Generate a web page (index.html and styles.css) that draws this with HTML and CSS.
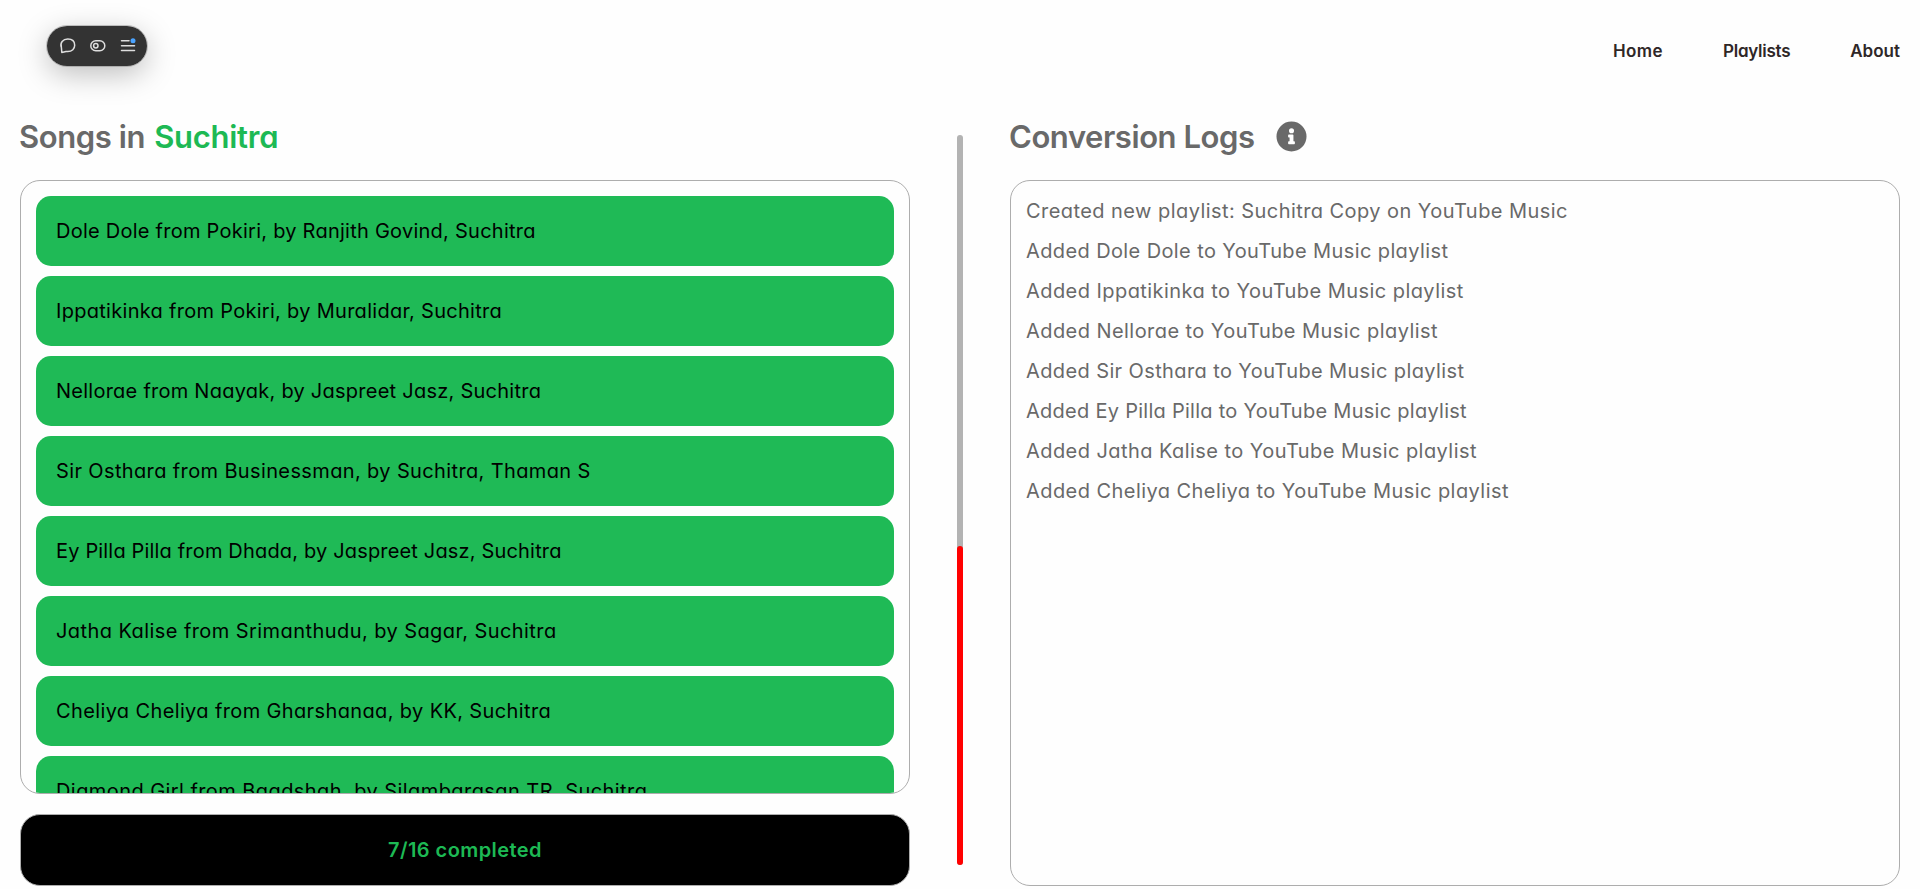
FILE: index.html
```
<!DOCTYPE html>
<html lang="en">
<head>
<meta charset="utf-8">
<title>Playlist conversion</title>
<link rel="stylesheet" href="styles.css">
</head>
<body>
<header class="header">
  <nav class="nav">
    <a class="nav-home">Home</a>
    <a class="nav-playlists">Playlists</a>
    <a class="nav-about">About</a>
  </nav>
</header>
<main class="main">
  <section class="column">
    <h1 class="title"><span class="title-lead">Songs in</span> <span class="accent">Suchitra</span></h1>
    <ul class="panel songs">
      <li>Dole Dole from Pokiri, by Ranjith Govind, Suchitra</li>
      <li>Ippatikinka from Pokiri, by Muralidar, Suchitra</li>
      <li>Nellorae from Naayak, by Jaspreet Jasz, Suchitra</li>
      <li>Sir Osthara from Businessman, by Suchitra, Thaman S</li>
      <li>Ey Pilla Pilla from Dhada, by Jaspreet Jasz, Suchitra</li>
      <li>Jatha Kalise from Srimanthudu, by Sagar, Suchitra</li>
      <li>Cheliya Cheliya from Gharshanaa, by KK, Suchitra</li>
      <li>Diamond Girl from Baadshah, by Silambarasan TR, Suchitra</li>
    </ul>
    <div class="status"><span>7/16 completed</span></div>
  </section>
  <div class="progress"><div class="progress-fill" style="height: 43.75%"></div></div>
  <section class="column">
    <h1 class="title">
      <span class="title-logs">Conversion Logs</span>
      <svg class="info" viewBox="0 0 512 512"><path fill="currentColor" fill-rule="evenodd" d="M256 8a248 248 0 1 0 0 496 248 248 0 0 0 0-496zm0 110a42 42 0 1 1 0 84 42 42 0 0 1 0-84zm56 254c0 7-5 12-12 12h-88c-7 0-12-5-12-12v-24c0-7 5-12 12-12h12v-64h-12c-7 0-12-5-12-12v-24c0-7 5-12 12-12h64c7 0 12 5 12 12v100h12c7 0 12 5 12 12z"/></svg>
    </h1>
    <ul class="panel logs">
      <li>Created new playlist: Suchitra Copy on YouTube Music</li>
      <li>Added Dole Dole to YouTube Music playlist</li>
      <li>Added Ippatikinka to YouTube Music playlist</li>
      <li>Added Nellorae to YouTube Music playlist</li>
      <li>Added Sir Osthara to YouTube Music playlist</li>
      <li>Added Ey Pilla Pilla to YouTube Music playlist</li>
      <li>Added Jatha Kalise to YouTube Music playlist</li>
      <li>Added Cheliya Cheliya to YouTube Music playlist</li>
    </ul>
  </section>
</main>
<div class="toolbar">
  <svg viewBox="0 0 100 40" fill="none" stroke="#dedede" stroke-width="1.5" stroke-linecap="round" stroke-linejoin="round">
    <path d="M14.8 26.4 14.4 21.5C12.6 16.8 16 13 20.8 13S27.7 16 27.7 19.3 25 25.6 20.8 25.6H19Z"/>
    <rect x="43.8" y="14.8" width="14" height="10" rx="5"/>
    <circle cx="48.8" cy="19.8" r="2.2"/>
    <path d="M74.5 14.8H82M74.5 19.7H87.5M74.5 24.6H87.5"/>
    <circle cx="86" cy="14.8" r="2.5" fill="#4aa3ff" stroke="none"/>
  </svg>
</div>
</body>
</html>
```
FILE: styles.css
```
* { box-sizing: border-box; }
body {
  margin: 0;
  height: 889px;
  overflow: hidden;
  display: flex;
  flex-direction: column;
  background: #fefefe;
  color: #696969;
  font: 20px/30px Inter, "Open Sans", sans-serif;
  font-feature-settings: "cv11" 1, "calt" 0;
  white-space: nowrap;
}
ul { list-style: none; margin: 0; }

.header {
  height: 103px;
  flex: none;
  padding: 0 20px 2px;
  display: flex;
  align-items: center;
  justify-content: flex-end;
}
.nav { display: flex; gap: 60px; font-size: 17px; font-weight: 600; color: #2f2727; }
.nav-home { letter-spacing: 0.4px; }
.nav-playlists { letter-spacing: -0.25px; }

.main {
  flex: 1;
  min-height: 0;
  padding: 0 20px 3px;
  display: grid;
  grid-template-columns: 890px 1fr 890px;
}
.column { display: flex; flex-direction: column; min-height: 0; }
.title {
  margin: 0 0 0 -1px;
  height: 77px;
  flex: none;
  display: flex;
  gap: 9px;
  padding-top: 10px;
  font-size: 31px;
  line-height: 48px;
  font-weight: 600;
}
.title-lead { letter-spacing: -0.4px; }
.title-logs { letter-spacing: -0.43px; }
.accent { color: #1db954; letter-spacing: -0.26px; }
.info { width: 31px; height: 31px; margin: 8px 0 0 12px; }

.panel { border: 1px solid #adadad; border-radius: 20px; overflow: hidden; flex: 1; min-height: 0; }
.songs { padding: 15px; }
.songs li {
  height: 70px;
  margin-bottom: 10px;
  padding: 20px;
  border-radius: 15px;
  background: #1fba56;
  color: #000;
  letter-spacing: 0.25px;
}
.songs li:nth-child(2) { letter-spacing: 0.29px; }
.songs li:nth-child(4) { letter-spacing: 0.37px; }
.songs li:nth-child(5) { letter-spacing: 0.17px; }
.songs li:nth-child(6), .songs li:nth-child(8) { letter-spacing: 0.43px; }
.songs li:nth-child(7) { letter-spacing: 0.37px; }
.logs { padding: 15px; }
.logs li { margin-bottom: 10px; letter-spacing: 0.44px; }
.logs li:nth-child(2), .logs li:nth-child(5) { letter-spacing: 0.39px; }
.logs li:nth-child(6) { letter-spacing: 0.27px; }

.status {
  flex: none;
  height: 72px;
  margin-top: 20px;
  border: 1px solid #adadad;
  border-radius: 20px;
  background: #000;
  color: #1db954;
  display: flex;
  align-items: center;
  justify-content: center;
  font-weight: 600;
  letter-spacing: 0.43px;
}
.progress {
  justify-self: center;
  width: 6px;
  height: 730px;
  margin-top: 32px;
  border-radius: 3px;
  background: #b3b3b3;
  display: flex;
  flex-direction: column;
  justify-content: flex-end;
}
.progress-fill { background: #f00; border-radius: 3px; }

.toolbar {
  position: absolute;
  left: 47px;
  top: 26px;
  width: 100px;
  height: 40px;
  border-radius: 20px;
  background: #333;
  outline: 1px solid #77777766;
  box-shadow: 0 8px 30px rgba(0, 0, 0, 0.26);
}
.toolbar svg { display: block; width: 100px; height: 40px; }
```
